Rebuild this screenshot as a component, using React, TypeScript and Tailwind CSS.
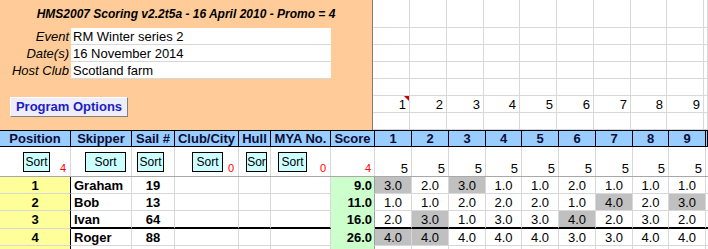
import React from "react";

type Result = {
  pos: number;
  name: string;
  sail: string;
  score: string;
  races: string[];
  dropped: number[];
};

const results: Result[] = [
  { pos: 1, name: "Graham", sail: "19", score: "9.0", races: ["3.0", "2.0", "3.0", "1.0", "1.0", "2.0", "1.0", "1.0", "1.0"], dropped: [0, 2] },
  { pos: 2, name: "Bob", sail: "13", score: "11.0", races: ["1.0", "1.0", "2.0", "2.0", "2.0", "1.0", "4.0", "2.0", "3.0"], dropped: [6, 8] },
  { pos: 3, name: "Ivan", sail: "64", score: "16.0", races: ["2.0", "3.0", "1.0", "3.0", "3.0", "4.0", "2.0", "3.0", "2.0"], dropped: [1, 5] },
  { pos: 4, name: "Roger", sail: "88", score: "26.0", races: ["4.0", "4.0", "4.0", "4.0", "4.0", "3.0", "3.0", "4.0", "4.0"], dropped: [0, 1] },
];

const raceNums = [1, 2, 3, 4, 5, 6, 7, 8, 9];
const gridCols =
  "grid grid-cols-[71px_61px_43px_64px_32px_60px_44px_37px_37px_37px_36px_37px_37px_37px_36px_37px_2px]";

function SortButton({ width, label = "Sort" }: { width: string; label?: string }) {
  return (
    <div
      className={`${width} flex h-[20px] items-center justify-center overflow-hidden border border-black bg-[#ccffff] text-[12px] leading-none`}
    >
      {label}
    </div>
  );
}

function Count({ value }: { value: string }) {
  return <span className="ml-auto self-end pb-[2px] text-[11px] leading-none text-[#ff0000]">{value}</span>;
}

function TopPanel() {
  return (
    <div className="flex h-[130px]">
      <div className="flex w-[375px] flex-col border-r border-[#8a7a6a] bg-[#ffcc99]">
        <div className="flex h-[28px] items-center justify-center text-[12px] font-bold italic">
          HMS2007 Scoring v2.2t5a - 16 April 2010 - Promo = 4
        </div>
        {[
          ["Event", "RM Winter series 2"],
          ["Date(s)", "16 November 2014"],
          ["Host Club", "Scotland farm"],
        ].map(([label, value]) => (
          <div key={label} className="flex h-[17px] text-[13px] leading-none">
            <div className="flex w-[71px] items-center justify-end pr-[2px] italic">{label}</div>
            <div className="flex w-[260px] items-center border-b border-[#d8d8d8] bg-white pl-[2px]">{value}</div>
          </div>
        ))}
        <div className="pl-[10px] pt-[18px]">
          <div className="flex h-[20px] w-[118px] items-center justify-center border border-b-[#808080] border-l-white border-r-[#808080] border-t-white bg-[#eeeefa] text-[13px] font-bold text-[#1c1cc8]">
            Program Options
          </div>
        </div>
      </div>
      <div className="grid flex-1 grid-cols-[37px_37px_37px_36px_37px_37px_37px_36px_37px_1fr] grid-rows-[28px_17px_17px_17px_17px_17px_17px]">
        {Array.from({ length: 70 }).map((_, i) => {
          const row = Math.floor(i / 10);
          const col = i % 10;
          const showNum = row === 5 && col < 9;
          return (
            <div
              key={i}
              className="relative flex items-center justify-end border-b border-r border-[#d8d8d8] pr-[3px] text-[13px] leading-none"
            >
              {showNum && raceNums[col]}
              {showNum && col === 0 && (
                <span className="absolute right-0 top-0 h-0 w-0 border-l-[5px] border-t-[5px] border-l-transparent border-t-[#cc0000]" />
              )}
            </div>
          );
        })}
      </div>
    </div>
  );
}

function HeaderRow() {
  const heads = ["Position", "Skipper", "Sail #", "Club/City", "Hull", "MYA No.", "Score", ...raceNums.map(String), ""];
  return (
    <div className={`${gridCols} h-[17px] border-y border-black bg-[#99ccff]`}>
      {heads.map((h, i) => (
        <div
          key={i}
          className="flex items-center justify-center overflow-hidden border-r border-black text-[13px] font-bold leading-none text-[#0d0d33]"
        >
          {h}
        </div>
      ))}
    </div>
  );
}

function SortRow() {
  return (
    <div className={`${gridCols} h-[30px] border-b border-[#a8a8a8] text-[12px]`}>
      <div className="flex items-center border-r border-[#d8d8d8] pl-[23px] pr-[4px]">
        <SortButton width="w-[27px]" />
        <Count value="4" />
      </div>
      <div className="flex items-center border-r border-[#d8d8d8] pl-[14px]">
        <SortButton width="w-[41px]" />
      </div>
      <div className="flex items-center border-r border-[#d8d8d8] pl-[5px]">
        <SortButton width="w-[27px]" />
      </div>
      <div className="flex items-center border-r border-[#d8d8d8] pl-[17px] pr-[4px]">
        <SortButton width="w-[31px]" />
        <Count value="0" />
      </div>
      <div className="flex items-center border-r border-[#d8d8d8] pl-[7px]">
        <SortButton width="w-[21px]" label="Sor" />
      </div>
      <div className="flex items-center border-r border-[#d8d8d8] pl-[7px] pr-[4px]">
        <SortButton width="w-[29px]" />
        <Count value="0" />
      </div>
      <div className="flex items-center border-r border-[#d8d8d8] pr-[3px]">
        <Count value="4" />
      </div>
      {raceNums.map((n) => (
        <div key={n} className="flex items-end justify-end border-r border-[#d8d8d8] pb-[1px] pr-[3px] text-[13px] leading-none">
          5
        </div>
      ))}
      <div />
    </div>
  );
}

function DataRow({ r, thick }: { r?: Result; thick?: boolean }) {
  const line = thick ? "border-b-2 border-b-black" : "border-b border-b-[#d8d8d8]";
  const h = thick ? "h-[18px]" : "h-[17px]";
  return (
    <div className={`${gridCols} ${h} text-[13px] leading-none`}>
      <div className="flex items-center justify-center border-b border-r border-b-[#d8d8d8] border-r-black bg-[#ffff99] font-bold">
        {r?.pos}
      </div>
      <div className={`flex items-center border-r border-r-[#d8d8d8] pl-[3px] font-bold ${line}`}>{r?.name}</div>
      <div className={`flex items-center justify-center border-r border-r-[#d8d8d8] font-bold ${line}`}>{r?.sail}</div>
      <div className={`border-r border-r-[#d8d8d8] ${line}`} />
      <div className={`border-r border-r-[#d8d8d8] ${line}`} />
      <div className={`border-r border-r-[#d8d8d8] ${line}`} />
      <div className="flex items-center justify-end border-b border-r border-b-[#ccffcc] border-r-[#a0a0a0] bg-[#ccffcc] pr-[2px] font-bold">
        {r?.score}
      </div>
      {raceNums.map((n, i) => (
        <div
          key={n}
          className={`flex items-center justify-center border-r border-r-[#d8d8d8] ${line} ${
            r && r.dropped.includes(i) ? "bg-[#c0c0c0]" : ""
          }`}
        >
          {r?.races[i]}
        </div>
      ))}
      <div className={line} />
    </div>
  );
}

export default function App() {
  return (
    <div className="h-[249px] w-[708px] overflow-hidden bg-white font-['Liberation_Sans',Arial,sans-serif] text-black">
      <TopPanel />
      <HeaderRow />
      <SortRow />
      {results.map((r, i) => (
        <DataRow key={r.pos} r={r} thick={i === 2} />
      ))}
      <DataRow />
    </div>
  );
}
